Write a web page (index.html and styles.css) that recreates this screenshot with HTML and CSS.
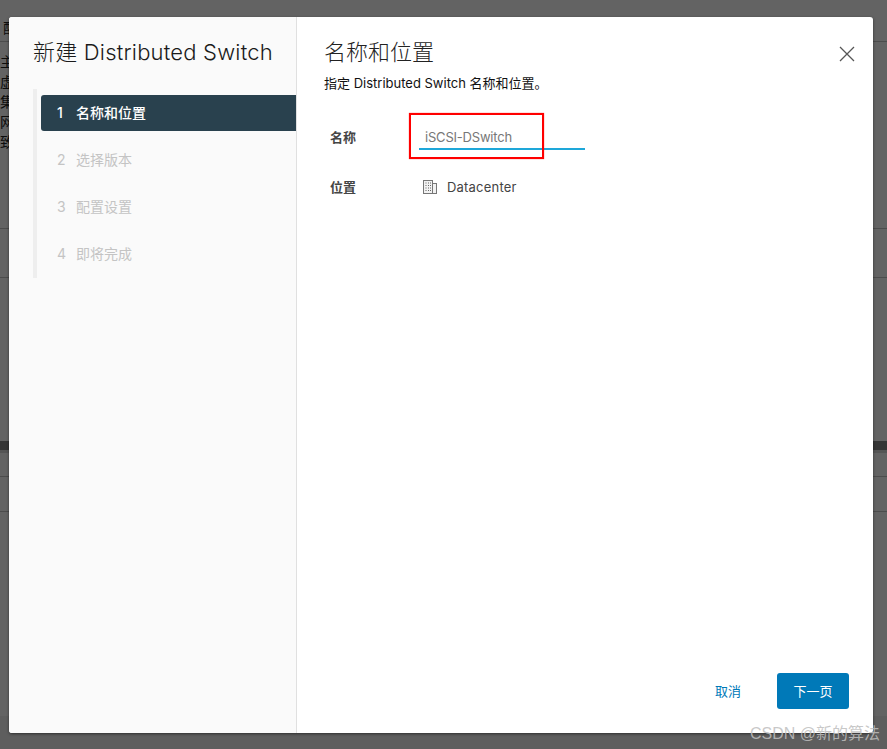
FILE: index.html
```html
<!DOCTYPE html>
<html lang="zh">

<head>
    <meta charset="UTF-8">
    <meta name="viewport" content="width=device-width, initial-scale=1.0">
    <title>新建 Distributed Switch</title>
    <link rel="stylesheet" href="styles.css">
</head>

<body>

<!-- page behind the dialog -->
<div class="page">
    <div class="page-row page-tab"><span>配</span></div>
    <div class="page-row page-info">
        <span>主</span>
        <span>虚</span>
        <span>集</span>
        <span>网</span>
        <span>致</span>
    </div>
    <div class="page-row page-gap"></div>
    <div class="page-row page-band"></div>
    <div class="page-row page-small"></div>
    <div class="page-row page-last"></div>
    <div class="page-foot"></div>
</div>
<div class="scrim"></div>

<div class="modal">
    <div class="sidebar">
        <h3 class="wizard-title">新建 Distributed Switch</h3>
        <ul class="steps">
            <li class="step active"><span class="num">1</span>名称和位置</li>
            <li class="step"><span class="num">2</span>选择版本</li>
            <li class="step"><span class="num">3</span>配置设置</li>
            <li class="step"><span class="num">4</span>即将完成</li>
        </ul>
    </div>
    <div class="content">
        <button class="close" type="button" aria-label="关闭">
            <svg width="16" height="16" viewBox="0 0 16 16">
                <path d="M1 1 L15 15 M15 1 L1 15" stroke="#565656" stroke-width="1.3" fill="none"/>
            </svg>
        </button>
        <h2 class="page-title">名称和位置</h2>
        <p class="desc">指定 Distributed Switch 名称和位置。</p>
        <div class="field name-field">
            <label for="switchName">名称</label>
            <input type="text" id="switchName" value="iSCSI-DSwitch">
        </div>
        <div class="field location-field">
            <label>位置</label>
            <div class="location">
                <svg width="16" height="16" viewBox="0 0 16 16" fill="none">
                    <rect x="1.500" y="1.500" width="9" height="13" fill="#f2f2f2" stroke="#777"/>
                    <rect x="10.500" y="4.500" width="4" height="10" fill="#f2f2f2" stroke="#777"/>
                    <path d="M3.500 4h1M6 4h1M8 4h1M3.500 6.500h1M6 6.500h1M8 6.500h1M3.500 9h1M6 9h1M8 9h1M3.500 11.500h1M6 11.500h1M8 11.500h1" stroke="#666"/>
                </svg>
                <span>Datacenter</span>
            </div>
        </div>
        <div class="footer">
            <button class="btn-link" type="button">取消</button>
            <button class="btn-primary" type="button">下一页</button>
        </div>
    </div>
</div>

<!-- annotation + watermark from the screenshot -->
<div class="red-box"></div>
<div class="watermark">CSDN @新的算法</div>

</body>

</html>
```

FILE: styles.css
```css
html,
body {
    margin: 0;
    height: 100%;
}

body {
    position: relative;
    width: 887px;
    height: 749px;
    overflow: hidden;
    font-family: Inter, "Noto Sans CJK SC", sans-serif;
    background: #fff;
}

/* background page */
.page-row {
    box-sizing: border-box;
    border-bottom: 1px solid #c4c4c4;
}

.page-tab {
    height: 42px;
    padding: 19px 0 0 3px;
    font-size: 14px;
    line-height: 17px;
    color: #222;
}

.page-info {
    height: 187px;
    padding-top: 10px;
    display: flex;
    flex-direction: column;
    font-size: 14px;
    line-height: 20px;
    color: #222;
}

.page-gap {
    height: 49px;
}

.page-band {
    height: 172px;
    border-bottom: 9px solid #8a8a8a;
}

.page-small {
    height: 27px;
    border-top: 3px solid #dadada;
}

.page-last {
    height: 35px;
}

.page-foot {
    height: 33px;
    margin-top: 204px;
    background: #f2f2f2;
}

.scrim {
    position: absolute;
    inset: 0;
    background: rgba(0, 0, 0, 0.61);
}

/* dialog */
.modal {
    position: absolute;
    left: 9px;
    top: 17px;
    width: 864px;
    height: 716px;
    display: flex;
    background: #fff;
    border-radius: 3px;
    box-shadow: 0 1px 3px rgba(0, 0, 0, 0.5);
}

.sidebar {
    box-sizing: border-box;
    width: 288px;
    flex-shrink: 0;
    padding: 19px 0 0 24px;
    background: #fafafa;
    border-right: 1px solid #e0e0e0;
    border-radius: 3px 0 0 3px;
}

.wizard-title {
    margin: 0 0 21px;
    font-size: 22px;
    font-weight: 300;
    line-height: 32px;
    letter-spacing: 0.2px;
    color: #1a1a1a;
    white-space: nowrap;
}

.steps {
    list-style: none;
    margin: 0;
    padding: 6px 0 6px 4px;
    border-left: 4px solid #eee;
    display: flex;
    flex-direction: column;
    gap: 11px;
}

.step {
    height: 36px;
    padding-left: 16px;
    font-size: 14px;
    line-height: 36px;
    color: #c4c4c4;
    white-space: nowrap;
}

.step .num {
    display: inline-block;
    width: 19px;
}

.step.active {
    background: #29414e;
    color: #fff;
    font-weight: 500;
    border-radius: 3px 0 0 3px;
}

.content {
    position: relative;
    flex: 1;
    padding: 20px 0 0 27px;
}

.close {
    position: absolute;
    top: 29px;
    right: 18px;
    padding: 0;
    border: none;
    background: none;
    line-height: 0;
}

.page-title {
    margin: 0;
    font-size: 22px;
    font-weight: 300;
    line-height: 30px;
    color: #222;
}

.desc {
    margin: 6px 0 0;
    font-size: 13px;
    line-height: 20px;
    color: #111;
}

.field {
    display: flex;
    align-items: center;
    padding-left: 6px;
}

.field label {
    width: 89px;
    font-size: 13px;
    font-weight: 600;
    color: #454545;
}

.name-field {
    margin-top: 25px;
    height: 36px;
}

.name-field input {
    box-sizing: border-box;
    align-self: flex-start;
    width: 166px;
    height: 28px;
    margin-top: 4px;
    padding: 4px 6px 0;
    border: none;
    border-bottom: 2px solid #1ea7d9;
    outline: none;
    background: none;
    font: 13px Inter, sans-serif;
    letter-spacing: -0.2px;
    color: #777;
}

.location-field {
    margin-top: 14px;
    height: 36px;
}

.location {
    display: flex;
    align-items: center;
    gap: 9px;
    margin: 2px 0 0 3px;
    font-size: 13px;
    letter-spacing: 0.2px;
    color: #444;
}

.footer {
    position: absolute;
    right: 24px;
    bottom: 24px;
    display: flex;
    align-items: center;
    gap: 22px;
}

.btn-link,
.btn-primary {
    font-family: inherit;
    font-size: 13px;
    border: none;
    cursor: pointer;
}

.btn-link {
    width: 54px;
    padding: 0 0 2px;
    background: none;
    color: #0079b8;
}

.btn-primary {
    width: 72px;
    height: 36px;
    padding-bottom: 2px;
    border-radius: 3px;
    background: #0079b8;
    color: #fff;
}

.red-box {
    position: absolute;
    left: 409px;
    top: 113px;
    width: 131px;
    height: 42px;
    border: 2px solid #f00;
    box-shadow: 0 0 1px rgba(255, 0, 0, 0.7);
}

.watermark {
    position: absolute;
    right: 7px;
    top: 724px;
    font-family: "Liberation Sans", "Noto Sans CJK SC", sans-serif;
    font-size: 16px;
    line-height: 20px;
    color: rgba(190, 190, 190, 0.85);
    white-space: nowrap;
}
```
